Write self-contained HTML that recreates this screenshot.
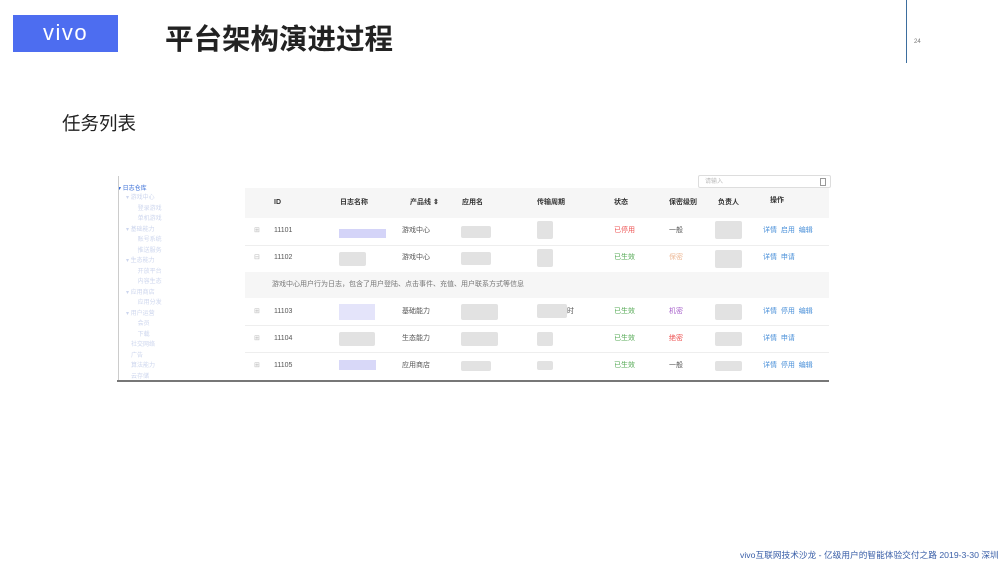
<!DOCTYPE html>
<html><head><meta charset="utf-8"><style>
body{margin:0;width:1000px;height:562px;background:#fff;position:relative;overflow:hidden;font-family:"Liberation Sans","Noto Sans CJK SC",sans-serif}
.a{position:absolute;white-space:nowrap}
.t{font-size:7px;color:#555;line-height:10px;height:10px}
.h{font-size:7px;color:#333;font-weight:bold;line-height:10px}
.blur{position:absolute;background:#e2e2e2;border-radius:2px}
.bl{position:absolute;background:#d4d4f8}
.tree{font-size:6px;color:#cdd6ee}
.op{color:#4a90d9}
</style></head><body>
<div class="a" style="left:13px;top:15px;width:105px;height:37px;background:#4d6df0;color:#fff;font-size:22px;line-height:36px;text-align:center;letter-spacing:1.5px;font-family:'Liberation Sans',sans-serif">vivo</div>
<div class="a" style="left:165px;top:17px;font-size:28.5px;font-weight:bold;color:#222;font-family:'Noto Sans CJK SC',sans-serif">平台架构演进过程</div>
<div class="a" style="left:906px;top:0;width:1px;height:63px;background:#3d6e9e"></div>
<div class="a" style="left:914px;top:39px;font-size:6px;color:#777">24</div>
<div class="a" style="left:62px;top:110px;font-size:18.5px;color:#222;font-family:'Noto Sans CJK SC',sans-serif">任务列表</div>

<div class="a" style="left:245px;top:188px;width:584px;height:30px;background:#f6f6f6"></div>
<div class="a" style="left:245px;top:272px;width:584px;height:26px;background:#f6f6f6"></div>
<div class="a" style="left:117px;top:380px;width:712px;height:2px;background:#777"></div>
<div class="a" style="left:698px;top:175px;width:133px;height:13px;border:1px solid #ddd;border-radius:2px;font-size:6px;color:#bbb;line-height:13px;padding-left:6px;box-sizing:border-box">请输入</div>
<div class="a" style="left:820px;top:178px;width:4px;height:6px;border:1px solid #999"></div>
<div class="a" style="left:245px;top:245px;width:584px;height:1px;background:#eee"></div>
<div class="a" style="left:245px;top:325px;width:584px;height:1px;background:#eee"></div>
<div class="a" style="left:245px;top:352px;width:584px;height:1px;background:#eee"></div>
<div class="a" style="left:118px;top:183px;font-size:6px;color:#3a6fd8">▾ 日志仓库</div>
<div class="a tree" style="left:126px;top:193px;line-height:10.5px">▾ 游戏中心<br>&nbsp;&nbsp;&nbsp;&nbsp;&nbsp;&nbsp;&nbsp;登录游戏<br>&nbsp;&nbsp;&nbsp;&nbsp;&nbsp;&nbsp;&nbsp;单机游戏<br>▾ 基础能力<br>&nbsp;&nbsp;&nbsp;&nbsp;&nbsp;&nbsp;&nbsp;账号系统<br>&nbsp;&nbsp;&nbsp;&nbsp;&nbsp;&nbsp;&nbsp;推送服务<br>▾ 生态能力<br>&nbsp;&nbsp;&nbsp;&nbsp;&nbsp;&nbsp;&nbsp;开放平台<br>&nbsp;&nbsp;&nbsp;&nbsp;&nbsp;&nbsp;&nbsp;内容生态<br>▾ 应用商店<br>&nbsp;&nbsp;&nbsp;&nbsp;&nbsp;&nbsp;&nbsp;应用分发<br>▾ 用户运营<br>&nbsp;&nbsp;&nbsp;&nbsp;&nbsp;&nbsp;&nbsp;会员<br>&nbsp;&nbsp;&nbsp;&nbsp;&nbsp;&nbsp;&nbsp;下载<br>&nbsp;&nbsp;&nbsp;社交网络<br>&nbsp;&nbsp;&nbsp;广告<br>&nbsp;&nbsp;&nbsp;算法能力<br>&nbsp;&nbsp;&nbsp;云存储</div>
<div class="a" style="left:118px;top:176px;width:1px;height:204px;background:#ccc"></div>
<div class="a h" style="left:274px;top:198px">ID</div>
<div class="a h" style="left:340px;top:198px">日志名称</div>
<div class="a h" style="left:410px;top:198px">产品线 ⇕</div>
<div class="a h" style="left:462px;top:198px">应用名</div>
<div class="a h" style="left:537px;top:198px">传输周期</div>
<div class="a h" style="left:614px;top:198px">状态</div>
<div class="a h" style="left:669px;top:198px">保密级别</div>
<div class="a h" style="left:718px;top:198px">负责人</div>
<div class="a h" style="left:770px;top:196px">操作</div>

<div class="a t" style="left:254px;top:226px;color:#bbb">⊞</div><div class="a t" style="left:274px;top:226px">11101</div>
<div class="bl" style="left:339px;top:229px;width:47px;height:9px"></div><div class="a t" style="left:402px;top:226px">游戏中心</div>
<div class="blur" style="left:461px;top:226px;width:30px;height:12px"></div><div class="blur" style="left:537px;top:221px;width:16px;height:18px"></div>
<div class="a t" style="left:614px;top:226px;color:#e55">已停用</div><div class="a t" style="left:669px;top:226px">一般</div>
<div class="blur" style="left:715px;top:221px;width:27px;height:18px"></div>
<div class="a t op" style="left:763px;top:226px">详情 &nbsp;启用 &nbsp;编辑</div>

<div class="a t" style="left:254px;top:253px;color:#bbb">⊟</div><div class="a t" style="left:274px;top:253px">11102</div>
<div class="blur" style="left:339px;top:252px;width:27px;height:14px"></div><div class="a t" style="left:402px;top:253px">游戏中心</div>
<div class="blur" style="left:461px;top:252px;width:30px;height:13px"></div><div class="blur" style="left:537px;top:249px;width:16px;height:18px"></div>
<div class="a t" style="left:614px;top:253px;color:#5a5">已生效</div><div class="a t" style="left:669px;top:253px;color:#eb9">保密</div>
<div class="blur" style="left:715px;top:250px;width:27px;height:18px"></div>
<div class="a t op" style="left:763px;top:253px">详情 &nbsp;申请</div>

<div class="a t" style="left:272px;top:280px;color:#777">游戏中心用户行为日志，包含了用户登陆、点击事件、充值、用户联系方式等信息</div>

<div class="a t" style="left:254px;top:307px;color:#bbb">⊞</div><div class="a t" style="left:274px;top:307px">11103</div>
<div class="bl" style="left:339px;top:304px;width:36px;height:16px;background:#e4e4fa"></div><div class="a t" style="left:402px;top:307px">基础能力</div>
<div class="blur" style="left:461px;top:304px;width:37px;height:16px"></div><div class="blur" style="left:537px;top:304px;width:30px;height:14px"></div><div class="a t" style="left:567px;top:307px">时</div>
<div class="a t" style="left:614px;top:307px;color:#5a5">已生效</div><div class="a t" style="left:669px;top:307px;color:#a6c">机密</div>
<div class="blur" style="left:715px;top:304px;width:27px;height:16px"></div>
<div class="a t op" style="left:763px;top:307px">详情 &nbsp;停用 &nbsp;编辑</div>

<div class="a t" style="left:254px;top:334px;color:#bbb">⊞</div><div class="a t" style="left:274px;top:334px">11104</div>
<div class="blur" style="left:339px;top:332px;width:36px;height:14px"></div><div class="a t" style="left:402px;top:334px">生态能力</div>
<div class="blur" style="left:461px;top:332px;width:37px;height:14px"></div><div class="blur" style="left:537px;top:332px;width:16px;height:14px"></div>
<div class="a t" style="left:614px;top:334px;color:#5a5">已生效</div><div class="a t" style="left:669px;top:334px;color:#e55">绝密</div>
<div class="blur" style="left:715px;top:332px;width:27px;height:14px"></div>
<div class="a t op" style="left:763px;top:334px">详情 &nbsp;申请</div>

<div class="a t" style="left:254px;top:361px;color:#bbb">⊞</div><div class="a t" style="left:274px;top:361px">11105</div>
<div class="bl" style="left:339px;top:360px;width:37px;height:10px;background:#d8d8f8"></div><div class="a t" style="left:402px;top:361px">应用商店</div>
<div class="blur" style="left:461px;top:361px;width:30px;height:10px"></div><div class="blur" style="left:537px;top:361px;width:16px;height:9px"></div>
<div class="a t" style="left:614px;top:361px;color:#5a5">已生效</div><div class="a t" style="left:669px;top:361px">一般</div>
<div class="blur" style="left:715px;top:361px;width:27px;height:10px"></div>
<div class="a t op" style="left:763px;top:361px">详情 &nbsp;停用 &nbsp;编辑</div>

<div class="a" style="left:740px;top:548px;font-size:8.7px;color:#3a5fa8">vivo互联网技术沙龙 - 亿级用户的智能体验交付之路 2019-3-30 深圳</div>
</body></html>
